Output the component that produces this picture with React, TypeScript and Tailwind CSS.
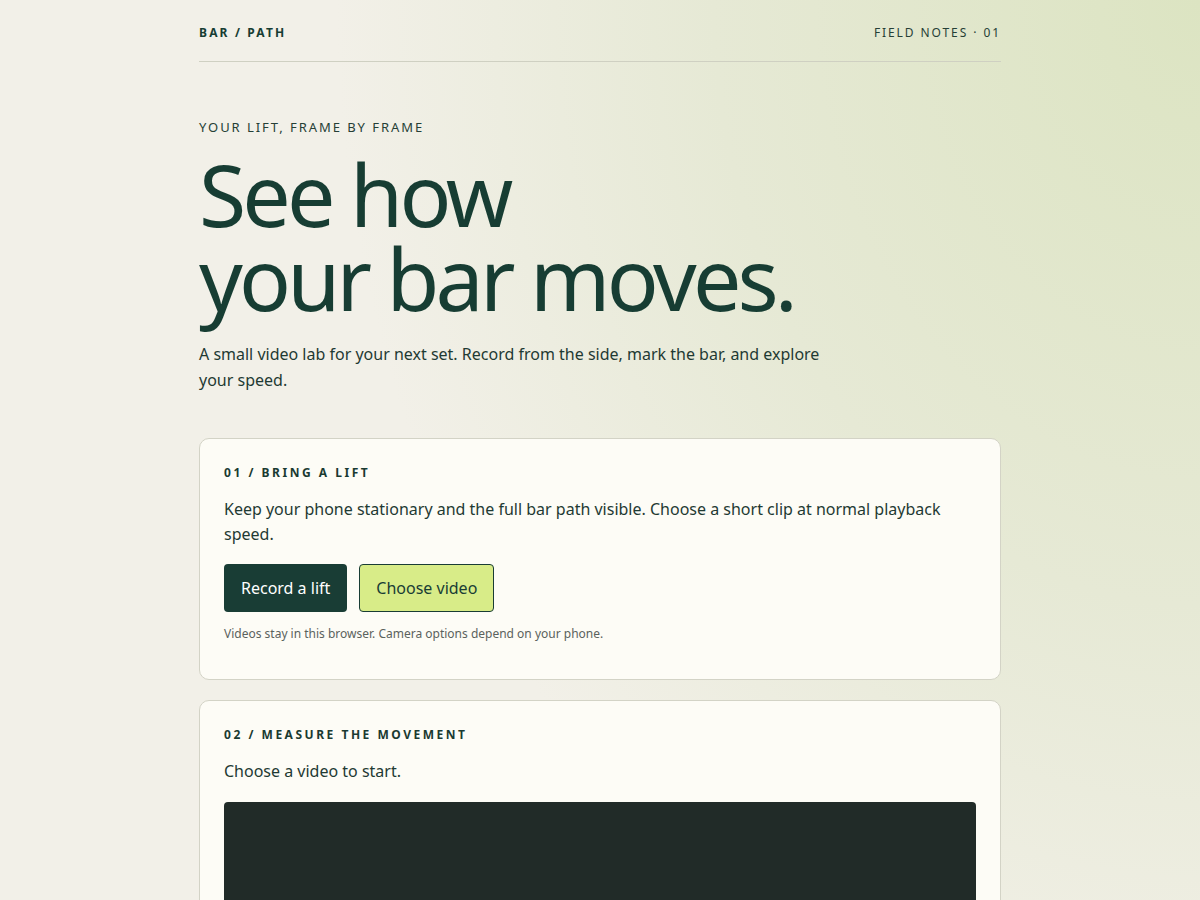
const font = "font-['Noto_Sans',sans-serif]";

export default function App() {
  return (
    <div
      className={`min-h-screen w-full bg-[#f2f0e8] bg-[radial-gradient(ellipse_90%_110%_at_100%_0%,#dce4c2_0%,#e6e9d5_45%,rgba(242,240,232,0)_80%)] text-[#173d33] ${font}`}
    >
      <div className="mx-auto w-[802px]">
        <header className="flex h-[62px] items-center justify-between border-b border-[#cfd0c2] pt-1">
          <span className="text-[12px] font-bold tracking-[0.18em]">BAR / PATH</span>
          <span className="text-[12px] tracking-[0.16em] text-[#263f36]">FIELD NOTES · 01</span>
        </header>

        <section className="pt-[56px]">
          <p className="text-[13px] tracking-[0.15em] text-[#263f36]">YOUR LIFT, FRAME BY FRAME</p>
          <h1 className="mt-[14px] text-[86px] leading-[84px] tracking-[-0.045em]">
            See how
            <br />
            your bar moves.
          </h1>
          <p className="mt-[21px] w-[630px] text-[16px] leading-[26px] text-[#1f3a33]">
            A small video lab for your next set. Record from the side, mark the bar, and explore your speed.
          </p>
        </section>

        <div className="mt-[45px] flex flex-col gap-5">
          <Card title="01 / BRING A LIFT">
            <p className="mt-[15px] text-[16px] leading-[25px] text-[#1f3a33]">
              Keep your phone stationary and the full bar path visible. Choose a short clip at normal playback speed.
            </p>
            <div className="mt-[17px] flex gap-3">
              <button className="h-12 rounded-[4px] bg-[#193d35] px-[17px] text-[16px] text-white">
                Record a lift
              </button>
              <button className="h-12 rounded-[4px] border border-[#193d35] bg-[#d8ec88] px-4 text-[16px] text-[#193d35]">
                Choose video
              </button>
            </div>
            <p className="mt-[13px] pb-[36px] text-[12px] text-[#5b625d]">
              Videos stay in this browser. Camera options depend on your phone.
            </p>
          </Card>

          <Card title="02 / MEASURE THE MOVEMENT">
            <p className="mt-[15px] text-[16px] leading-[25px] text-[#1f3a33]">Choose a video to start.</p>
            <div className="mt-[18px] h-[420px] rounded-[4px] bg-[#212b28]" />
          </Card>
        </div>
      </div>
    </div>
  );
}

function Card({ title, children }: { title: string; children: React.ReactNode }) {
  return (
    <div className="rounded-[10px] border border-[#d3d3c6] bg-[#fdfcf6] px-6 pt-[25px]">
      <h2 className="text-[12px] font-bold leading-[18px] tracking-[0.21em] text-[#1a3a31]">{title}</h2>
      {children}
    </div>
  );
}
